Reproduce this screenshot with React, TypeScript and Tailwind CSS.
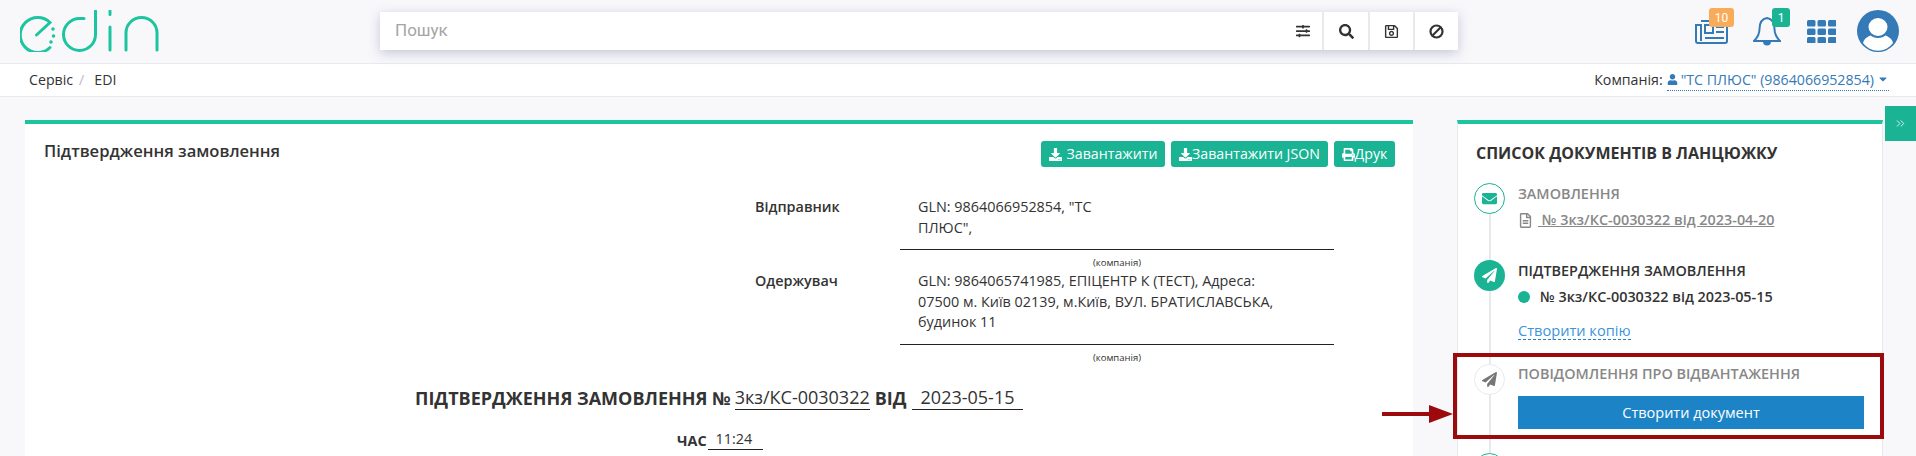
import React from "react";
import {
  FaDownload, FaPrint, FaUser, FaSearch, FaRegSave, FaPaperPlane, FaEnvelope,
  FaRegFileAlt, FaCaretDown, FaSlidersH,
} from "react-icons/fa";
import { ChevronsRight } from "lucide-react";

function Logo() {
  return (
    <svg width="140" height="42" viewBox="20 10 140 42" fill="none" stroke="#1cc5a0" strokeWidth="3" strokeLinecap="round">
      <path d="M36.5 35 L50 22.5 A 17.5 17.5 0 1 0 50 47.5" />
      <path d="M95.5 11 V 34.5 A 16 16 0 1 1 79.5 18.5 H 84" />
      <path d="M110 11 V 14.5 M110 27 V 50" />
      <path d="M126 50 V 33 A 15.5 15.5 0 0 1 157 33 V 50" />
      <g fill="#1cc5a0" stroke="none">
        <circle cx="53" cy="29" r="1.8" /><circle cx="53.5" cy="36" r="1.8" /><circle cx="51" cy="42" r="1.8" />
      </g>
    </svg>
  );
}

function Avatar() {
  return (
    <svg width="42" height="42" viewBox="0 0 42 42">
      <circle cx="21" cy="21" r="21" fill="#337ab7" />
      <path d="M6 33 C 7 28 12 26 16 24.5 L26 24.5 C 30 26 35 28 36 33 A 18.5 18.5 0 0 1 6 33 Z" fill="#fff" />
      <ellipse cx="21" cy="17" rx="10.5" ry="10" fill="#fff" stroke="#337ab7" strokeWidth="2" />
    </svg>
  );
}

function News() {
  return (
    <svg width="33" height="24" viewBox="0 0 33 24" fill="none" stroke="#337ab7" strokeWidth="2">
      <path d="M6 1 H32 V21 A2 2 0 0 1 30 23 H3 A2 2 0 0 1 1 21 V5 H6 V21" />
      <rect x="10" y="5" width="8" height="8" strokeWidth="2" />
      <path d="M21 7 H29 M21 12 H29 M10 18 H29" />
    </svg>
  );
}

function Bell() {
  return (
    <svg width="28" height="30" viewBox="0 0 28 30" fill="none" stroke="#337ab7" strokeWidth="2">
      <path d="M14 2 C 8 3 6.5 8 6.5 13 C 6.5 19 4 22 1 25 H 27 C 24 22 21.5 19 21.5 13 C 21.5 8 20 3 14 2 Z" />
      <path d="M11 25.5 A 3 3 0 0 0 17 25.5 Z" fill="#337ab7" />
    </svg>
  );
}

function Apps() {
  const xs = [0, 10.5, 21];
  const ys = [0, 8.5, 17];
  return (
    <svg width="29" height="23" viewBox="0 0 29 23" fill="#337ab7">
      {ys.map((y) => xs.map((x) => <rect key={`${x}-${y}`} x={x} y={y} width="8.5" height="6.5" rx="1.5" />))}
    </svg>
  );
}

function Ban() {
  return (
    <svg width="15" height="15" viewBox="0 0 15 15" fill="none" stroke="#333" strokeWidth="2.2">
      <circle cx="7.5" cy="7.5" r="6" />
      <path d="M3.5 11.5 L11.5 3.5" />
    </svg>
  );
}

function Btn({ icon, label, gap, w }: { icon: React.ReactNode; label: string; gap: string; w: string }) {
  return (
    <button className={`flex h-[26px] items-center justify-center rounded-[3px] bg-[#1ab394] text-[14.2px] text-white ${w} ${gap}`}>
      {icon}
      {label}
    </button>
  );
}

function SearchBtn({ children, w }: { children: React.ReactNode; w: string }) {
  return <div className={`flex h-full items-center justify-center border-l-2 border-[#e7eaec] text-[#333] ${w}`}>{children}</div>;
}

export default function App() {
  return (
    <div className="relative h-[456px] w-[1916px] overflow-hidden bg-[#f8f8fb] font-['Open_Sans',sans-serif] text-[14.4px] text-[#333]">
      <header className="flex h-[64px] items-start border-b border-[#e7eaec]">
        <div className="ml-[20px] mt-[10px] w-[340px]"><Logo /></div>
        <div className="ml-[20px] mt-[12px] flex h-[38px] w-[1078px] items-center bg-white shadow-[0_3px_12px_rgba(100,105,150,0.35)]">
          <span className="flex-1 pl-[15px] font-['Roboto',sans-serif] text-[17px] text-[#a5a5a5]">Пошук</span>
          <div className="flex h-full w-[50px] items-center justify-end pr-[12px] text-[#333]"><FaSlidersH size={14} /></div>
          <SearchBtn w="w-[46px]"><FaSearch size={15} /></SearchBtn>
          <SearchBtn w="w-[45px]"><FaRegSave size={15} /></SearchBtn>
          <SearchBtn w="w-[45px]"><Ban /></SearchBtn>
        </div>
        <div className="ml-[237px] flex h-[63px] items-start">
          <div className="relative mt-[20px]">
            <News />
            <span className="absolute left-[14px] top-[-12px] flex h-[19px] w-[25px] items-center justify-center rounded-[3px] bg-[#f8ac59] font-['Roboto',sans-serif] text-[12px] text-white">10</span>
          </div>
          <div className="relative ml-[25px] mt-[16px]">
            <Bell />
            <span className="absolute left-[19px] top-[-8px] flex h-[19px] w-[18px] items-center justify-center rounded-[3px] bg-[#1ab394] font-['Roboto',sans-serif] text-[12px] text-white">1</span>
          </div>
          <div className="ml-[26px] mt-[20px]"><Apps /></div>
          <div className="ml-[21px] mt-[10px]"><Avatar /></div>
        </div>
      </header>

      <div className="flex h-[33px] items-center justify-between border-b border-[#e7eaec] bg-white pl-[29px] pr-[27px] text-[14.2px]">
        <div className="flex items-center">
          <span>Сервіс</span>
          <span className="ml-[6px] text-[#bbb]">/</span>
          <span className="ml-[10px]">EDI</span>
        </div>
        <div className="flex items-center">
          <span>Компанія:</span>
          <span className="ml-[4px] flex items-center gap-[3px] border-b border-dotted border-[#337ab7] text-[#337ab7]">
            <FaUser size={11} />"ТС ПЛЮС" (9864066952854)<FaCaretDown size={12} />
          </span>
        </div>
      </div>

      <main className="flex items-start pl-[25px] pt-[23px]">
        <section className="h-[400px] w-[1388px] shrink-0 border-t-4 border-[#1cc5a0] bg-white">
          <div className="flex items-start justify-between pl-[19px] pr-[18px] pt-[17px]">
            <h2 className="text-[16.6px] font-semibold leading-[20px]">Підтвердження замовлення</h2>
            <div className="flex gap-[6px]">
              <Btn w="w-[124px]" gap="gap-[5px]" icon={<FaDownload size={13} />} label="Завантажити" />
              <Btn w="w-[157px]" gap="gap-0" icon={<FaDownload size={13} />} label="Завантажити JSON" />
              <Btn w="w-[61px]" gap="gap-0" icon={<FaPrint size={13} />} label="Друк" />
            </div>
          </div>

          <div className="ml-[730px] mt-[30px] flex w-[605px] leading-[20.5px]">
            <div className="w-[145px] shrink-0 font-semibold">Відправник</div>
            <div className="w-[210px] pl-[18px]">GLN: 9864066952854, "ТС ПЛЮС",</div>
          </div>
          <div className="ml-[875px] mt-[11px] w-[434px] border-t border-[#222] pt-[6px] text-center text-[9.5px] leading-[13px]">(компанія)</div>
          <div className="ml-[730px] mt-[2px] flex w-[605px] leading-[20.5px]">
            <div className="w-[145px] shrink-0 font-semibold">Одержувач</div>
            <div className="w-[390px] pl-[18px]">GLN: 9864065741985, ЕПІЦЕНТР К (ТЕСТ), Адреса: 07500 м. Київ 02139, м.Київ, ВУЛ. БРАТИСЛАВСЬКА, будинок 11</div>
          </div>
          <div className="ml-[875px] mt-[11px] w-[434px] border-t border-[#222] pt-[6px] text-center text-[9.5px] leading-[13px]">(компанія)</div>

          <div className="ml-[390px] mt-[22px] flex items-end text-[18px] font-bold leading-[24px]">
            <span>ПІДТВЕРДЖЕННЯ ЗАМОВЛЕННЯ №</span>
            <span className="ml-[4px] border-b border-[#222] pb-[1px] leading-[22px] font-normal">3кз/КС-0030322</span>
            <span className="ml-[5px]">ВІД</span>
            <span className="ml-[5px] w-[111px] border-b border-[#222] pb-[1px] pl-[9px] leading-[22px] font-normal">2023-05-15</span>
          </div>
          <div className="ml-[652px] mt-[20px] flex items-end leading-[18px]">
            <span className="font-bold">ЧАС</span>
            <span className="ml-[1px] w-[55px] border-b border-[#222] pb-[1px] pl-[8px]">11:24</span>
          </div>
        </section>

        <aside className="ml-[44px] h-[400px] w-[426px] shrink-0 border-x border-t-4 border-x-[#e7eaec] border-t-[#1cc5a0] bg-white">
          <h3 className="ml-[18px] mt-[17px] text-[16px] font-bold leading-[24px]">СПИСОК ДОКУМЕНТІВ В ЛАНЦЮЖКУ</h3>
          <div className="relative ml-[16px] mt-[18px] font-semibold">
            <div className="absolute bottom-0 left-[15px] top-0 w-[2px] bg-[#e7eaec]" />
            <div className="relative flex h-[77px]">
              <div className="flex h-[31px] w-[31px] items-center justify-center rounded-full border border-[#1ab394] bg-white text-[#1ab394]"><FaEnvelope size={15} /></div>
              <div className="ml-[13px] text-[#888]">
                <div className="leading-[22px]">ЗАМОВЛЕННЯ</div>
                <div className="mt-[4px] flex items-center leading-[22px]">
                  <FaRegFileAlt size={15} />
                  <span className="ml-[5px] underline whitespace-pre"> № 3кз/КС-0030322 від 2023-04-20</span>
                </div>
              </div>
            </div>
            <div className="relative flex h-[104px]">
              <div className="flex h-[31px] w-[31px] items-center justify-center rounded-full bg-[#1ab394] text-white"><FaPaperPlane size={15} /></div>
              <div className="ml-[13px]">
                <div className="leading-[22px]">ПІДТВЕРДЖЕННЯ ЗАМОВЛЕННЯ</div>
                <div className="mt-[4px] flex items-center leading-[22px]">
                  <span className="h-[12px] w-[12px] rounded-full bg-[#1ab394]" />
                  <span className="ml-[10px]">№ 3кз/КС-0030322 від 2023-05-15</span>
                </div>
                <div className="mt-[13px] w-fit border-b border-dashed border-[#1c84c6] text-[14.6px] font-normal leading-[18px] text-[#3c95d8]">Створити копію</div>
              </div>
            </div>
            <div className="relative flex h-[89px]">
              <div className="flex h-[31px] w-[31px] items-center justify-center rounded-full border border-[#e7eaec] bg-white text-[#777]"><FaPaperPlane size={15} /></div>
              <div className="ml-[13px] w-[346px]">
                <div className="leading-[20px] text-[#888]">ПОВІДОМЛЕННЯ ПРО ВІДВАНТАЖЕННЯ</div>
                <div className="mt-[12px] flex h-[33px] items-center justify-center bg-[#1c84c6] text-[14.5px] font-normal text-white">Створити документ</div>
              </div>
            </div>
            <div className="relative h-[31px] w-[31px] rounded-full border border-[#1ab394] bg-white" />
          </div>
        </aside>

        <div className="ml-[2px] -mt-[14px] flex h-[35px] w-[31px] shrink-0 items-center justify-center bg-[#1ab394] text-white"><ChevronsRight size={13} strokeWidth={1.5} /></div>
      </main>

      <div className="absolute left-[1453px] top-[353px] h-[86px] w-[431px] border-4 border-[#9c0a0d]" />
      <svg className="absolute left-[1382px] top-[403px]" width="72" height="22" viewBox="0 0 72 22">
        <rect x="0" y="9" width="48" height="4" fill="#9c0a0d" />
        <path d="M47 2 L71 11 L47 20 Z" fill="#9c0a0d" />
      </svg>
    </div>
  );
}
